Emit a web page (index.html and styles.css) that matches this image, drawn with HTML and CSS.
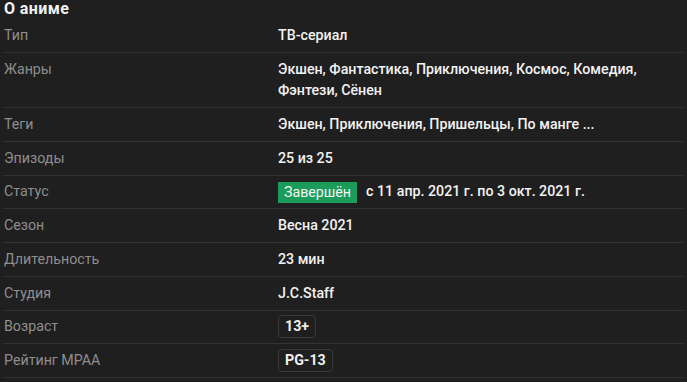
FILE: index.html
```html
<!DOCTYPE html>
<html lang="ru">
<head>
<meta charset="utf-8">
<link rel="stylesheet" href="styles.css">
</head>
<body>
<section class="info">
  <h2 class="title">О аниме</h2>
  <dl class="list">
    <div class="row"><dt class="label">Тип</dt><dd class="value">ТВ-сериал</dd></div>
    <div class="row"><dt class="label">Жанры</dt><dd class="value">Экшен, Фантастика, Приключения, Космос, Комедия, Фэнтези, Сёнен</dd></div>
    <div class="row"><dt class="label">Теги</dt><dd class="value">Экшен, Приключения, Пришельцы, По манге ...</dd></div>
    <div class="row"><dt class="label">Эпизоды</dt><dd class="value">25 из 25</dd></div>
    <div class="row"><dt class="label">Статус</dt><dd class="value"><span class="status">Завершён</span><span class="dates">с 11 апр. 2021 г. по 3 окт. 2021 г.</span></dd></div>
    <div class="row"><dt class="label">Сезон</dt><dd class="value">Весна 2021</dd></div>
    <div class="row"><dt class="label">Длительность</dt><dd class="value">23 мин</dd></div>
    <div class="row"><dt class="label">Студия</dt><dd class="value">J.C.Staff</dd></div>
    <div class="row"><dt class="label">Возраст</dt><dd class="value"><span class="chip">13+</span></dd></div>
    <div class="row"><dt class="label">Рейтинг MPAA</dt><dd class="value"><span class="chip">PG-13</span></dd></div>
  </dl>
</section>
</body>
</html>
```
FILE: styles.css
```css
html, body {
  margin: 0;
  padding: 0;
  background: #1f1f1f;
}
body {
  font-family: Roboto, "Liberation Sans", sans-serif;
  color: #f0f0f0;
  font-size: 14.22px;
}
.info {
  padding: 0 4px 0 3px;
}
.title {
  margin: 0;
  font-size: 16px;
  letter-spacing: 0.4px;
  font-weight: 700;
  line-height: 18px;
  height: 19.6px;
  color: #f2f2f2;
  padding-left: 1px;
}
.list {
  margin: 0;
}
.row {
  display: grid;
  grid-template-columns: 275px 1fr;
  padding: 5.69px 0;
  line-height: 21.33px;
  border-bottom: 1px solid #333333;
}
.label {
  margin: 0;
  color: #8e8e8e;
  padding-left: 1px;
}
.value {
  margin: 0;
  font-weight: 500;
  color: #f2f2f2;
  display: flex;
  align-items: center;
  flex-wrap: wrap;
  min-height: 21.33px;
}
.status {
  background: #1b9c5a;
  color: #f4f4f4;
  font-weight: 400;
  line-height: 21px;
  height: 21px;
  padding: 0 6px;
  margin-right: 9px;
}
.chip {
  display: block;
  border: 1px solid #3a3a3a;
  border-radius: 4px;
  font-weight: 700;
  line-height: 21px;
  height: 21px;
  padding: 0 6px;
  margin: -1px 0;
  color: #f0f0f0;
}
```
